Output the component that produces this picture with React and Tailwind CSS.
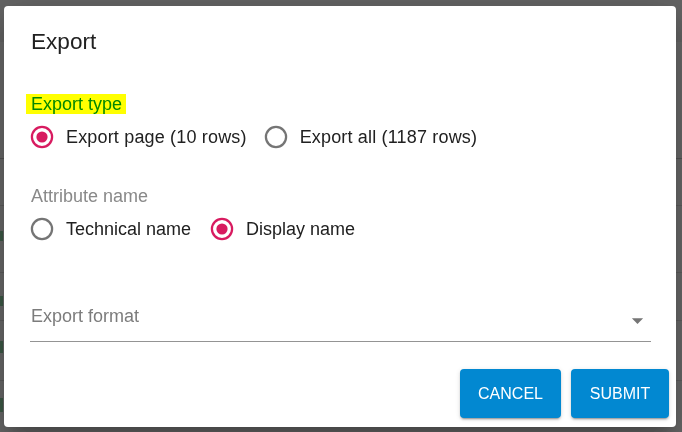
import React from "react";

function Radio({ checked }) {
  return (
    <svg width="24" height="24" viewBox="0 0 24 24" className="shrink-0">
      <circle cx="12" cy="12" r="10.1" fill="none" stroke={checked ? "#d81b60" : "#757575"} strokeWidth="2.25" />
      {checked && <circle cx="12" cy="12" r="5.6" fill="#d81b60" />}
    </svg>
  );
}

function Option({ checked, label, wide }) {
  return (
    <div className="flex items-center h-[44px]">
      <Radio checked={checked} />
      <span
        className={
          wide
            ? "ml-[12px] text-[18px] text-[#212121] leading-[22px] whitespace-nowrap tracking-[0.17px]"
            : "ml-[12px] text-[18px] text-[#212121] leading-[22px] whitespace-nowrap"
        }
      >
        {label}
      </span>
    </div>
  );
}

export default function App() {
  return (
    <div
      className="relative w-[682px] h-[432px] overflow-hidden bg-[#6b6b6b]"
      style={{ fontFamily: "'Liberation Sans', Arial, sans-serif" }}
    >
      {/* backdrop page content */}
      <div className="flex flex-col w-full">
        <div className="h-[42px] bg-[#656565]" />
        <div className="h-[116px] pt-[38px] text-[20px] leading-[24px] text-[#1a1a1a]">
          <span className="ml-[-6px]">t</span>
        </div>
        <div className="h-px bg-[#555]" />
        <div className="h-[47px] border-b border-[#5f5f5f]" />
        <div className="h-[67px] border-b border-[#5f5f5f] flex items-center">
          <div className="w-[3px] h-[10px] bg-[#3f5c48] mt-[-6px]" />
        </div>
        <div className="h-[48px] border-b border-[#5f5f5f] flex items-center">
          <div className="w-[3px] h-[10px] bg-[#3f5c48] mt-[8px]" />
        </div>
        <div className="h-[60px] border-b border-[#5f5f5f] flex items-center">
          <div className="w-[3px] h-[12px] bg-[#3f5c48] mt-[-8px]" />
        </div>
        <div className="h-[40px] flex items-center">
          <div className="w-[3px] h-[14px] bg-[#3f5c48] mt-[8px]" />
        </div>
      </div>

      {/* dialog */}
      <div className="absolute left-[4px] top-[6px] w-[672px] h-[421px] bg-white rounded-[4px] shadow-[0_11px_15px_-7px_rgba(0,0,0,0.2),0_24px_38px_3px_rgba(0,0,0,0.14),0_9px_46px_8px_rgba(0,0,0,0.12)] flex flex-col">
        <div className="pt-[20px] pl-[27px] text-[22.6px] leading-[32px] text-[#212121]">Export</div>

        <div className="pl-[26px] pr-[25px] flex flex-col">
          <div className="mt-[36px] h-[20px] flex">
            <div className="relative">
              <span className="block text-[18px] leading-[20px] text-[#0288d1] whitespace-nowrap pl-[1px]">Export type</span>
              <div className="absolute left-[-4px] right-[-4px] top-0 h-[20px] bg-[#ffff00] mix-blend-multiply" />
            </div>
          </div>
          <div className="mt-[1px] flex items-center">
            <Option checked wide label="Export page (10 rows)" />
            <div className="ml-[17px]"><Option wide label="Export all (1187 rows)" /></div>
          </div>

          <div className="mt-[26px] h-[22px] text-[18px] leading-[22px] text-[#898989] pl-[1px]">Attribute name</div>
          <div className="flex items-center">
            <Option label="Technical name" />
            <div className="ml-[19px]"><Option checked label="Display name" /></div>
          </div>

          <div className="mt-[54px] h-[22px] flex items-start justify-between text-[18px] leading-[22px] text-[#7c7c7c] pl-[1px]">
            <span>Export format</span>
            <svg width="27" height="27" viewBox="0 0 24 24" className="mt-[2px] shrink-0">
              <path d="M7 10l5 5 5-5z" fill="#757575" />
            </svg>
          </div>
          <div className="mt-[14px] h-px bg-[#949494]" />
        </div>

        <div className="mt-auto flex justify-end gap-[10px] pr-[7px] pb-[9px]">
          <button className="w-[101px] h-[49px] rounded-[4px] bg-[#0288d1] text-white text-[16px] font-normal uppercase shadow-[0_3px_1px_-2px_rgba(0,0,0,0.2),0_2px_2px_0_rgba(0,0,0,0.14),0_1px_5px_0_rgba(0,0,0,0.12)]">
            Cancel
          </button>
          <button className="w-[98px] h-[49px] rounded-[4px] bg-[#0288d1] text-white text-[16px] font-normal uppercase shadow-[0_3px_1px_-2px_rgba(0,0,0,0.2),0_2px_2px_0_rgba(0,0,0,0.14),0_1px_5px_0_rgba(0,0,0,0.12)]">
            Submit
          </button>
        </div>
      </div>
    </div>
  );
}
